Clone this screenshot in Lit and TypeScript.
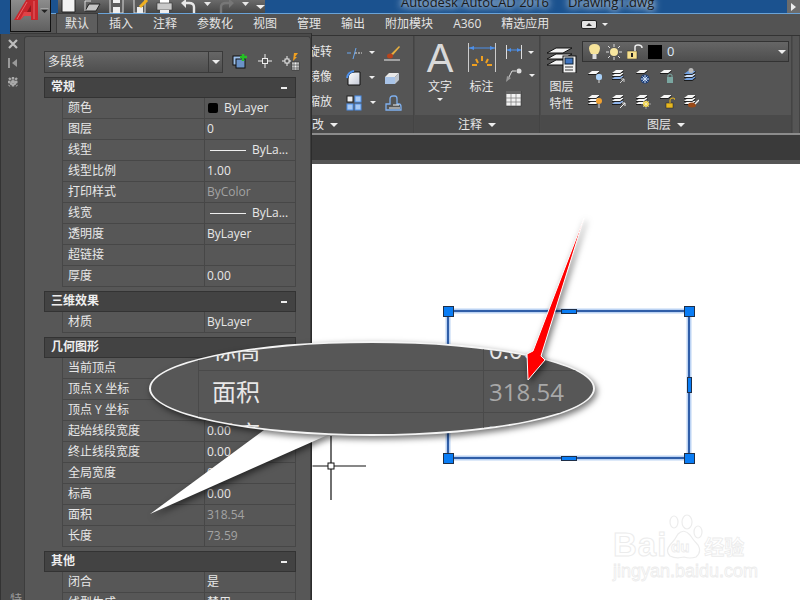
import { LitElement, html, css, svg, nothing } from "lit";
import { customElement } from "lit/decorators.js";

type Row = { k: string; v?: string; kind?: "dim" | "color" | "line" };
type Section = { title: string; rows: Row[]; collapsible?: boolean };

const SECTIONS: Section[] = [
  { title: "常规", collapsible: true, rows: [
    { k: "颜色", v: "ByLayer", kind: "color" }, { k: "图层", v: "0" },
    { k: "线型", v: "ByLa...", kind: "line" }, { k: "线型比例", v: "1.00" },
    { k: "打印样式", v: "ByColor", kind: "dim" }, { k: "线宽", v: "ByLa...", kind: "line" },
    { k: "透明度", v: "ByLayer" }, { k: "超链接" }, { k: "厚度", v: "0.00" } ] },
  { title: "三维效果", collapsible: true, rows: [{ k: "材质", v: "ByLayer" }] },
  { title: "几何图形", rows: [
    { k: "当前顶点" }, { k: "顶点 X 坐标" }, { k: "顶点 Y 坐标" },
    { k: "起始线段宽度", v: "0.00" }, { k: "终止线段宽度", v: "0.00" }, { k: "全局宽度", v: "0.00" },
    { k: "标高", v: "0.00" }, { k: "面积", v: "318.54", kind: "dim" }, { k: "长度", v: "73.59", kind: "dim" } ] },
  { title: "其他", collapsible: true, rows: [{ k: "闭合", v: "是" }, { k: "线型生成", v: "禁用" }] },
];

const TABS = ["默认", "插入", "注释", "参数化", "视图", "管理", "输出", "附加模块", "A360", "精选应用"];

const ico = (w: number, h: number, body: unknown) =>
  html`<svg class="ico" width=${w} height=${h} viewBox="0 0 ${w} ${h}">${body}</svg>`;

const plate = (y: number, fill = "#f6f6f6") =>
  svg`<polygon points="1,${y + 3} 5,${y} 13,${y} 9,${y + 3}" fill=${fill}/><path d="M1 ${y + 3.500}H9.500L13 ${y + .500}" fill="none" stroke="#161616" stroke-width=".9"/>`;
const stack = (c = "#f6f6f6") => svg`${plate(8, c)}${plate(5)}${plate(2)}`;

const QA = [
  ico(17, 14, svg`<path d="M2 -6H11L15 -2V12H2Z" fill="#f2f2f2" stroke="#222"/>`),
  ico(17, 14, svg`<path d="M1 11 5 4H16L12 11Z" fill="#c4c4c4" stroke="#222"/><path d="M1 11V1H7" fill="none" stroke="#ddd"/>`),
  ico(17, 14, svg`<rect x="2" y="-4" width="13" height="17" fill="#5b5b5b" stroke="#ddd"/><rect x="5" y="7" width="7" height="6" fill="#eee"/><rect x="5" y="-1" width="7" height="4" fill="#eee"/>`),
  ico(17, 14, svg`<rect x="2" y="-4" width="11" height="17" fill="#5b5b5b" stroke="#ddd"/><rect x="5" y="7" width="6" height="6" fill="#eee"/><path d="M8 7 15 0" stroke="#f0b020" stroke-width="3"/>`),
  ico(17, 14, svg`<rect x="4" y="-4" width="9" height="7" fill="#fff"/><rect x="1" y="3" width="15" height="7" fill="#c9c9c9" stroke="#333" stroke-width=".6"/><rect x="4" y="10" width="9" height="3" fill="#eee"/>`),
  ico(17, 14, svg`<path d="M14 13V7Q14 3 9 3H4" fill="none" stroke="#e8e8e8" stroke-width="2.400"/><path d="M1 3 6 -1V8Z" fill="#e8e8e8"/>`),
  ico(7, 14, svg`<path d="M0 2H7L3.500 6Z" fill="#e8e8e8"/>`),
  ico(17, 14, svg`<path d="M3 13V7Q3 3 8 3H13" fill="none" stroke="#777" stroke-width="2.400"/><path d="M16 3 11 -1V8Z" fill="#777"/>`),
  ico(7, 14, svg`<path d="M0 2H7L3.500 6Z" fill="#e8e8e8"/>`),
  ico(9, 14, svg`<path d="M0 5H9L4.500 9Z" fill="#f0f0f0"/>`),
];

const I = {
  offset: ico(16, 14, svg`<path d="M1 7H5M7 13 10 2" stroke="#6aa8f0" fill="none"/><path d="M9 7H16" stroke="#dcdcdc" stroke-dasharray="2 1"/>`),
  brush: ico(17, 16, svg`<path d="M7 9 15 1l1 1-7 8Z" fill="#e8b040"/><ellipse cx="6" cy="11" rx="3" ry="2.500" fill="#b8441c"/><path d="M0 15H16" stroke="#eee"/>`),
  fillet: ico(16, 16, svg`<defs><linearGradient id="fg" x1="0" y1="0" x2="1" y2="1"><stop offset="0" stop-color="#fff"/><stop offset="1" stop-color="#c3c8d6"/></linearGradient></defs><path d="M2 15V9Q2 2 9 2H14V15Z" fill="url(#fg)" stroke="#111"/><path d="M1 8Q2 2 8 1" fill="none" stroke="#4d90ea" stroke-width="2"/>`),
  box: ico(17, 14, svg`<path d="M1 6H11V13H1Z" fill="#a9c4e8"/><path d="M5 2H15L11 6H1Z" fill="#e9e9e9"/><path d="M11 6 15 2V9L11 13Z" fill="#bfc6cf"/>`),
  array: ico(17, 16, svg`<rect x="1" y="1" width="6" height="6" fill="#eee" stroke="#222"/><rect x="9" y="1" width="6" height="6" fill="#a9c9f2" stroke="#4d90ea"/><rect x="1" y="9" width="6" height="6" fill="#a9c9f2" stroke="#4d90ea"/><rect x="9" y="9" width="6" height="6" fill="#a9c9f2" stroke="#4d90ea"/>`),
  boundary: ico(17, 16, svg`<path d="M1 15V9H5V4Q5 1 8 1H10Q12 1 12 4V9H14Q16 9 16 12V15Z" fill="#555" stroke="#7fb0ee" stroke-width="1.300"/><path d="M8 10H14M4 13H15" stroke="#eee"/>`),
  dimSmall: ico(16, 14, svg`<path d="M.5 0V14M15.500 0V14" stroke="#ddd"/><path d="M1 5H15" stroke="#4d90ea"/><path d="M1 5 5 3V7ZM15 5 11 3V7Z" fill="#4d90ea"/>`),
  leader: ico(17, 14, svg`<circle cx="13" cy="3" r="2.500" fill="#ddd"/><path d="M10 3H6L2 11" fill="none" stroke="#ddd"/><path d="M0 14 1 8 5 10Z" fill="#999"/>`),
  table: ico(16, 16, svg`<rect x="0" y="0" width="15" height="15" fill="#f2f2f2" stroke="#333" stroke-width=".6"/><rect x="0" y="0" width="15" height="3" fill="#666"/><path d="M5 3V15M10 3V15M0 7H15M0 11H15" stroke="#777" stroke-width=".7"/>`),
  layerBig: ico(31, 30, svg`<polygon points="1,22 10,17 26,17 17,22" fill="#f4f4f4" stroke="#111"/><polygon points="1,16 10,11 26,11 17,16" fill="#f4f4f4" stroke="#111"/><polygon points="1,10 10,5 26,5 17,10" fill="#f4f4f4" stroke="#111"/><rect x="17" y="13" width="13" height="17" fill="#f2f2f2" stroke="#111"/><rect x="19" y="15" width="8" height="6" fill="#3f74c0" stroke="#123"/><path d="M19 24H27M19 27H27" stroke="#333"/>`),
  bulb: ico(13, 17, svg`<path d="M3 11Q1 8 1 5.500 1 1 6.500 1 12 1 12 5.500 12 8 10 11Z" fill="#f6e39a"/><rect x="4.500" y="11" width="4" height="5" fill="#ddd"/>`),
  sun: ico(16, 16, svg`<circle cx="8" cy="8" r="4" fill="#f7e6a0"/><path d="M8 0V3M8 13V16M0 8H3M13 8H16M2 2 4 4M12 12 14 14M14 2 12 4M4 12 2 14" stroke="#ddd"/>`),
  lock: ico(16, 15, svg`<rect x="0" y="7" width="10" height="8" fill="#f7e08c" stroke="#222" stroke-width=".5"/><rect x="4" y="9" width="2" height="4" fill="#222"/><path d="M8 7V3Q8 1 11 1 15 1 15 4" fill="none" stroke="#eee" stroke-width="1.500"/>`),
};

const LAYER_ICONS = [
  ico(16, 16, svg`${plate(3)}<rect x="9" y="6" width="6" height="6" rx="2" fill="#a8d0f8"/><path d="M12 12V15" stroke="#ddd"/>`),
  ico(16, 16, svg`${stack("#8fb4ea")}<path d="M9 15 13 11M10 11H13V14" stroke="#ccc" fill="none"/>`),
  ico(16, 16, svg`${plate(2)}<circle cx="10" cy="11" r="4.500" fill="#1e3f78"/><path d="M10 7V15M6 11H14M7.500 8.500 12.500 13.500M12.500 8.500 7.500 13.500" stroke="#cfe2fa"/>`),
  ico(16, 16, svg`${plate(2)}<rect x="8" y="9" width="6" height="6" fill="#7aa6a0"/><path d="M9 9V7Q11 5 13 7V9" fill="none" stroke="#7aa6a0"/>`),
  ico(16, 16, svg`${plate(9, "#6f9fe0")}${plate(6, "#cfe0f8")}${plate(3, "#6f9fe0")}<circle cx="8" cy="2.500" r="2.500" fill="#bbb"/>`),
  ico(16, 16, svg`${stack()}<circle cx="12" cy="8" r="3" fill="#f0a030"/><path d="M12 11V15" stroke="#ddd"/>`),
  ico(16, 16, svg`${stack("#8fb4ea")}<path d="M9 15 14 10M11 10H14V13" stroke="#eee" fill="none"/>`),
  ico(16, 16, svg`${stack()}<circle cx="11" cy="11" r="3" fill="#f5d020"/><path d="M11 6V16M6 11H16M8 8 14 14M14 8 8 14" stroke="#eee" stroke-width=".5"/>`),
  ico(16, 16, svg`${plate(2)}<rect x="7" y="10" width="7" height="5" fill="#e8b820" stroke="#222" stroke-width=".5"/><path d="M11 10V7Q11 5 14 5 16 5 16 7" fill="none" stroke="#e8b820"/>`),
  ico(16, 16, svg`${stack()}<ellipse cx="9" cy="12" rx="4" ry="2.500" fill="#9a4a18"/><path d="M12 11 16 7" stroke="#eee" stroke-width="1.500"/>`),
];

const tri = html`<span class="tri"></span>`;

@customElement("app-root")
export class AppRoot extends LitElement {
  static styles = css`
    :host { display: block; width: 800px; height: 600px; position: relative; overflow: hidden;
      background: #fff; color: #e8e8e8;
      font: 12px/1.2 "Open Sans", "Noto Sans CJK SC", sans-serif; }
    svg.ico { display: block; flex: none; }
    .page { display: flex; flex-direction: column; height: 600px; }

    .titlebar { height: 14px; flex: none; display: flex; background: #1b528f; overflow: hidden;
      border-bottom: 1px solid #6aa3d8; box-sizing: border-box; }
    .qa { margin-left: 58px; width: 207px; flex: none; display: flex; gap: 7px; padding-left: 2px; box-sizing: border-box;
      background: linear-gradient(#6a6a6a, #474747); }
    .title { margin: -7px 0 0 136px; display: flex; color: #1a1a1a; font-size: 13px; line-height: 18px; white-space: nowrap;
      text-shadow: 0 0 6px #fff, 0 0 10px #dce9f5; }
    .title span + span { margin-left: 19px; }
    .winbtn { margin-left: auto; width: 13px; flex: none; background: #6c6c6c; display: flex; align-items: center; justify-content: center; }
    .winbtn i { border-left: 5px solid #eee; border-top: 4px solid transparent; border-bottom: 4px solid transparent; }

    .tabs { height: 22px; flex: none; display: flex; align-items: center; gap: 20px; padding-left: 65px; background: #535353;
      border-bottom: 1px solid #333; box-sizing: border-box; position: relative; font-size: 12px; color: #e4e4e4; }
    .tab { flex: none; }
    .tab.on { outline: 1px solid #3a3a3a; background: #5e5e5e; padding: 3px 8px 4px; margin: 0 -8px; }
    .pill { width: 14px; height: 7px; background: #e4e4e4; border-radius: 2px; margin-left: 12px; border: 1px solid #222; display: flex; align-items: center; justify-content: center; }
    .pill i { border-bottom: 3px solid #333; border-left: 3px solid transparent; border-right: 3px solid transparent; }
    .tabs .tri { margin-left: -15px; border-top-width: 3px; border-left-width: 3px; border-right-width: 3px; }
    .tri { display: inline-block; width: 0; height: 0; border-top: 4px solid #eee; border-left: 4px solid transparent; border-right: 4px solid transparent; flex: none; }

    .ribbon { height: 97px; flex: none; display: flex; gap: 1px; background: #4b4b4b; border-bottom: 2px solid #8c8c8c; box-sizing: content-box; }
    .panel { display: flex; flex-direction: column; background: #555; border-right: 1px solid #444; box-sizing: border-box; }
    .pbody { flex: 1; display: flex; min-height: 0; }
    .ptitle { height: 18px; flex: none; background: #4a4a4a; display: flex; align-items: center; justify-content: center; gap: 6px; color: #e6e6e6; padding-top: 2px; box-sizing: border-box; }
    .p-mod { width: 414px; }
    .p-mod .pbody { flex-direction: column; align-items: flex-end; padding: 4px 10px 0 0; box-sizing: border-box; }
    .p-mod .ptitle { justify-content: flex-start; padding-left: 300px; }
    .modrow { height: 25px; display: flex; align-items: center; width: 95px; }
    .modrow b { font-weight: 400; width: 38px; flex: none; }
    .modrow .tri { margin: 0 9px 0 7px; border-top-width: 3px; border-left-width: 3px; border-right-width: 3px; }
    .p-ann { width: 125px; }
    .p-ann .pbody { padding-top: 7px; box-sizing: border-box; }
    .bigA { width: 50px; display: flex; flex-direction: column; align-items: center; flex: none; padding-left: 0; }
    .bigA em { font: 400 40px/30px "Liberation Sans", sans-serif; color: #d9d9d9; height: 31px; }
    .bigA span { margin-top: 6px; }
    .bigA .tri { margin-top: 4px; border-top-width: 3px; border-left-width: 3px; border-right-width: 3px; }
    .dimcol { width: 33px; flex: none; display: flex; flex-direction: column; align-items: center; }
    .dimcol > span { margin-top: 6px; }
    .annside { margin-left: 8px; display: flex; flex-direction: column; gap: 9px; padding-top: 2px; }
    .annside div { display: flex; align-items: center; gap: 6px; }
    .annside .tri { border-top-width: 3px; border-left-width: 3px; border-right-width: 3px; }
    .p-lay { width: 251px; }
    .laybig { width: 41px; flex: none; display: flex; flex-direction: column; align-items: center; padding-top: 7px; line-height: 17px; box-sizing: border-box; }
    .laybig span:first-of-type { margin-top: 5px; }
    .layright { flex: 1; padding-top: 5px; min-width: 0; }
    .laydd { width: 207px; height: 21px; box-sizing: border-box; border: 1px solid #333; background: linear-gradient(#666, #4e4e4e); display: flex; align-items: center; padding-left: 5px; gap: 5px; }
    .swatch { width: 14px; height: 14px; background: #000; flex: none; }
    .laydd .zero { color: #dbe8f8; font-size: 13px; }
    .laydd .tri { margin-left: auto; margin-right: 2px; }
    .layicons { display: grid; grid-template-columns: repeat(5, 16px); gap: 9px 8px; padding: 6px 0 0 5px; }
    .p-rest { flex: 1; }

    .strip { height: 29px; flex: none; box-sizing: border-box; background: #3a3a3a; border-bottom: 4px solid #555; }
    .canvas { flex: 1; background: #fff; }

    .palette { position: absolute; left: 0; top: 33px; width: 312px; height: 567px; display: flex; background: #4a4a4a;
      border-top: 1px solid #3a3a3a; border-right: 1px solid #2c2c2c; box-sizing: border-box; }
    .pstrip { width: 24px; flex: none; display: flex; flex-direction: column; align-items: center; padding-top: 3px; gap: 5px; box-sizing: border-box; position: relative; border-left: 1px solid #333; }
    .pstrip .vert { position: absolute; bottom: -17px; left: 6px; writing-mode: vertical-rl; color: #9a9a9a; }
    .pmain { flex: 1; margin-top: 2px; padding: 14px 0 0 19px; background: #575757; border: 1px solid #3d3d3d; border-bottom: 0; border-radius: 3px 3px 0 0; overflow: hidden; box-sizing: border-box; }
    .combo { display: flex; align-items: center; margin-bottom: 4px; height: 22px; }
    .combo-box { width: 179px; height: 22px; box-sizing: border-box; border: 1px solid #3a3a3a; background: linear-gradient(#666, #4f4f4f); display: flex; align-items: center; justify-content: space-between; padding-left: 3px; }
    .combo-arrow { width: 13px; align-self: stretch; border-left: 1px solid #3a3a3a; display: flex; align-items: center; justify-content: center; }
    .combo-icons { display: flex; gap: 9px; margin-left: 9px; }
    .sec { width: 252px; margin-bottom: 4px; }
    .sechead { height: 21px; box-sizing: border-box; background: #434343; border: 1px solid #333; display: flex; align-items: center; justify-content: space-between; padding: 0 8px 0 6px; font-weight: 700; color: #eee; }
    .sechead i { width: 6px; height: 2px; background: #eee; }
    .row { height: 21px; margin-left: 18px; box-sizing: border-box; display: grid; grid-template-columns: 142px 1fr; border-bottom: 1px solid #474747; border-left: 1px solid #474747; border-right: 1px solid #474747; }
    .row > div { display: flex; align-items: center; white-space: nowrap; }
    .k { padding-left: 5px; border-right: 1px solid #474747; }
    .v { padding-left: 2px; gap: 6px; }
    .v.dim { color: #a3a3a3; }
    .dot { width: 10px; height: 10px; background: #000; border-radius: 2px; margin-left: 1px; }
    .ln { width: 36px; height: 1px; background: #eee; margin-left: 3px; }

    .over { position: absolute; left: 0; top: 0; pointer-events: none; }
    .tail { filter: drop-shadow(2px 3px 3px rgba(0,0,0,.55)); }
    .ellipse { position: absolute; left: 149px; top: 341px; width: 446px; height: 95px; box-sizing: border-box; border-radius: 50%;
      border: 2px solid #f4f4f4; background: #575757; overflow: hidden; box-shadow: 2px 3px 6px rgba(0,0,0,.55); }
    .mag { margin: -14px 0 0 47px; font-size: 24px; line-height: 42px; }
    .magrow { height: 42px; box-sizing: border-box; display: grid; grid-template-columns: 285px 1fr; border-bottom: 1px solid #4a4a4a; }
    .magrow div { padding-left: 13px; border-left: 1px solid #4a4a4a; white-space: nowrap; }
    .magrow div + div { padding-left: 5px; }
    .magrow .dim { color: #a8a8a8; }
    .mark { position: absolute; left: 613px; top: 514px; width: 150px; color: #fff; }
    .mark-top { display: flex; align-items: flex-end; height: 46px; }
    .mark b { font: 700 33px/30px "Liberation Sans", sans-serif; color: #fff; -webkit-text-stroke: 1px #ececec; letter-spacing: 1px; }
    .mark .cn { font: 700 20px/26px "Noto Sans CJK SC", sans-serif; color: #fff; -webkit-text-stroke: .8px #ececec; margin-left: 1px; }
    .mark .paw { margin-left: -2px; flex: none; }
    .mark .url { font: 400 18px/20px "Liberation Sans", sans-serif; color: #fff; -webkit-text-stroke: .8px #ececec; white-space: nowrap; margin-top: 1px; }
  `;

  private section(s: Section) {
    return html`<div class="sec">
      <div class="sechead"><span>${s.title}</span>${s.collapsible ? html`<i></i>` : nothing}</div>
      ${s.rows.map((r) => html`<div class="row">
        <div class="k">${r.k}</div>
        <div class="v ${r.kind ?? ""}">
          ${r.kind === "color" ? html`<span class="dot"></span>` : nothing}
          ${r.kind === "line" ? html`<span class="ln"></span>` : nothing}
          ${r.v ?? ""}
        </div>
      </div>`)}
    </div>`;
  }

  private modRow(t: string, a: unknown, b: unknown) {
    return html`<div class="modrow"><b>${t}</b>${a}${tri}${b}</div>`;
  }

  private logo() {
    return html`<svg class="over" width="56" height="34" viewBox="0 0 56 34">
      <defs><linearGradient id="lg" x1="0" y1="0" x2="0" y2="1"><stop offset="0" stop-color="#8f8f8f"/><stop offset="1" stop-color="#5f5f5f"/></linearGradient></defs>
      <rect x="0" y="0" width="10" height="34" fill="#1b528f"/>
      <rect x="10.500" y="-2" width="40" height="33.500" fill="url(#lg)" stroke="#111"/>
      <polygon points="14,20 26,0 38,0 38,20 31,20 31,16 24,16 20,20" fill="#c9262c"/>
      <polygon points="31,5 31,12 27,12" fill="#8e1a1e"/>
      <polygon points="20,20 24,12 31,12 31,16 24,16" fill="#df4348"/>
      <path d="M17 19 27 2M34 1V19" stroke="#e8666a" stroke-width="1"/>
      <path d="M40.500 9H48.500L44.500 13Z" fill="#222"/>
      <path d="M40.500 9H48.500" stroke="#ddd" stroke-width=".8"/>
    </svg>`;
  }

  render() {
    return html`
      <div class="page">
        <div class="titlebar">
          <div class="qa">${QA}</div>
          <div class="title"><span>Autodesk AutoCAD 2016</span><span>Drawing1.dwg</span></div>
          <div class="winbtn"><i></i></div>
        </div>
        <div class="tabs">
          ${TABS.map((t, i) => html`<div class="tab ${i === 0 ? "on" : ""}">${t}</div>`)}
          <span class="pill"><i></i></span>${tri}
        </div>
        <div class="ribbon">
          <div class="panel p-mod">
            <div class="pbody">
              ${this.modRow("旋转", I.offset, I.brush)}
              ${this.modRow("镜像", I.fillet, I.box)}
              ${this.modRow("缩放", I.array, I.boundary)}
            </div>
            <div class="ptitle"><span>修改</span>${tri}</div>
          </div>
          <div class="panel p-ann">
            <div class="pbody">
              <div class="bigA"><em>A</em><span>文字</span>${tri}</div>
              <div class="dimcol">
                ${ico(28, 31, svg`<path d="M.5 0V29M27.500 0V29" stroke="#ccc"/><path d="M1 5H27" stroke="#4d90ea"/><path d="M1 5 6 3V7ZM27 5 22 3V7Z" fill="#4d90ea"/><path d="M14 13V18M8 16 10 20M20 16 18 20M4 22H9M19 22H24" stroke="#f0a020" stroke-width="2"/>`)}
                <span>标注</span>
              </div>
              <div class="annside">
                <div>${I.dimSmall}${tri}</div>
                <div>${I.leader}${tri}</div>
                <div>${I.table}</div>
              </div>
            </div>
            <div class="ptitle"><span>注释</span>${tri}</div>
          </div>
          <div class="panel p-lay">
            <div class="pbody">
              <div class="laybig">${I.layerBig}<span>图层</span><span>特性</span></div>
              <div class="layright">
                <div class="laydd">${I.bulb}${I.sun}${I.lock}<span class="swatch"></span><span class="zero">0</span>${tri}</div>
                <div class="layicons">${LAYER_ICONS}</div>
              </div>
            </div>
            <div class="ptitle"><span>图层</span>${tri}</div>
          </div>
          <div class="panel p-rest"></div>
        </div>
        <div class="strip"></div>
        <div class="canvas"></div>
      </div>

      <aside class="palette">
        <div class="pstrip">
          ${ico(14, 14, svg`<path d="M3 3 11 11M11 3 3 11" stroke="#bdbdbd" stroke-width="2.200"/>`)}
          ${ico(14, 14, svg`<path d="M3 2V12" stroke="#999" stroke-width="2"/><path d="M6 7 11 3V11Z" fill="#999"/>`)}
          ${ico(14, 14, svg`<path d="M3 3 11 11M11 3 3 11M7 2V12M2 7H12" stroke="#aaa" stroke-width="2.400" stroke-dasharray="2.500 1"/>`)}
          <span class="vert">特性</span>
        </div>
        <div class="pmain">
          <div class="combo">
            <div class="combo-box"><span>多段线</span><span class="combo-arrow">${tri}</span></div>
            <div class="combo-icons">
              ${ico(16, 16, svg`<rect x="1" y="3" width="9" height="9" fill="#9cc0ea" stroke="#111"/><rect x="4" y="6" width="9" height="9" fill="#6b93c8" stroke="#111"/><path d="M11 1V8M8 4H15" stroke="#25c025" stroke-width="2.500"/>`)}
              ${ico(16, 16, svg`<path d="M8 1V15M1 8H15" stroke="#eee"/><rect x="5.500" y="5.500" width="5" height="5" fill="#555" stroke="#eee"/>`)}
              ${ico(18, 18, svg`<path d="M0 8H9M5 3V13" stroke="#eee"/><rect x="3" y="6" width="4" height="4" fill="#555" stroke="#eee"/><path d="M12 0H16L13 4H15L11 8Z" fill="#f0a020"/><rect x="10" y="9" width="7" height="8" fill="#eee" stroke="#222" stroke-width=".5"/><path d="M12 9V17M15 9V17M10 12H17M10 15H17" stroke="#333" stroke-width=".6"/>`)}
            </div>
          </div>
          ${SECTIONS.map((s) => this.section(s))}
        </div>
      </aside>

      <svg class="over" width="800" height="600" viewBox="0 0 800 600">
        <g fill="none">
          <path d="M448 311H689V458H448Z" stroke="#bcd3f3" stroke-width="5"/>
          <path d="M448 311H689V458H448Z" stroke="#2f5ea8" stroke-width="2"/>
        </g>
        <g fill="#0a7df5" stroke="#1f2f48">
          <rect x="443.500" y="306.500" width="10" height="10"/><rect x="684.500" y="306.500" width="10" height="10"/>
          <rect x="443.500" y="453.500" width="10" height="10"/><rect x="684.500" y="453.500" width="10" height="10"/>
          <rect x="561.500" y="309.500" width="15" height="4"/><rect x="561.500" y="456.500" width="15" height="4"/>
          <rect x="687.500" y="377.500" width="4" height="15"/>
        </g>
        <path d="M312.500 466H366M331 436V500" stroke="#111" stroke-width="1.200" fill="none"/>
        <rect x="328" y="463" width="6" height="6" fill="#fff" stroke="#111"/>
        <polygon class="tail" points="150,514 264,430 330,434" fill="#fff"/>
      </svg>

      <div class="ellipse">
        <div class="mag">
          <div class="magrow"><div>标高</div><div>0.00</div></div>
          <div class="magrow"><div>面积</div><div class="dim">318.54</div></div>
          <div class="magrow"><div>长度</div><div class="dim">73.59</div></div>
        </div>
      </div>

      <svg class="over" width="800" height="600" viewBox="0 0 800 600">
        <polygon class="tail" points="584,218 533,351 527,354 528,380 545,360 541,356" fill="#f00" stroke="#fff" stroke-width="1"/>
      </svg>

      <div class="mark">
        <div class="mark-top">
          <b>Bai</b>
          <svg class="paw" width="38" height="46" viewBox="0 0 38 46" fill="none" stroke="#ececec" stroke-width="1.200">
            <ellipse cx="9" cy="8" rx="4" ry="6"/><ellipse cx="22" cy="8" rx="5" ry="7"/><ellipse cx="33" cy="18" rx="4" ry="6"/>
            <path d="M5 42Q0 37 5 31 10 26 13 20 19 14 25 21 29 27 33 31 37 38 31 43 25 45 19 43 11 45 5 42Z" fill="#fff"/>
            <text x="6" y="38" font-family="Liberation Sans, sans-serif" font-size="15" font-weight="700" fill="#fff" stroke="#ececec" stroke-width=".8">du</text>
          </svg>
          <span class="cn">经验</span>
        </div>
        <div class="url">jingyan.baidu.com</div>
      </div>

      ${this.logo()}
    `;
  }
}
